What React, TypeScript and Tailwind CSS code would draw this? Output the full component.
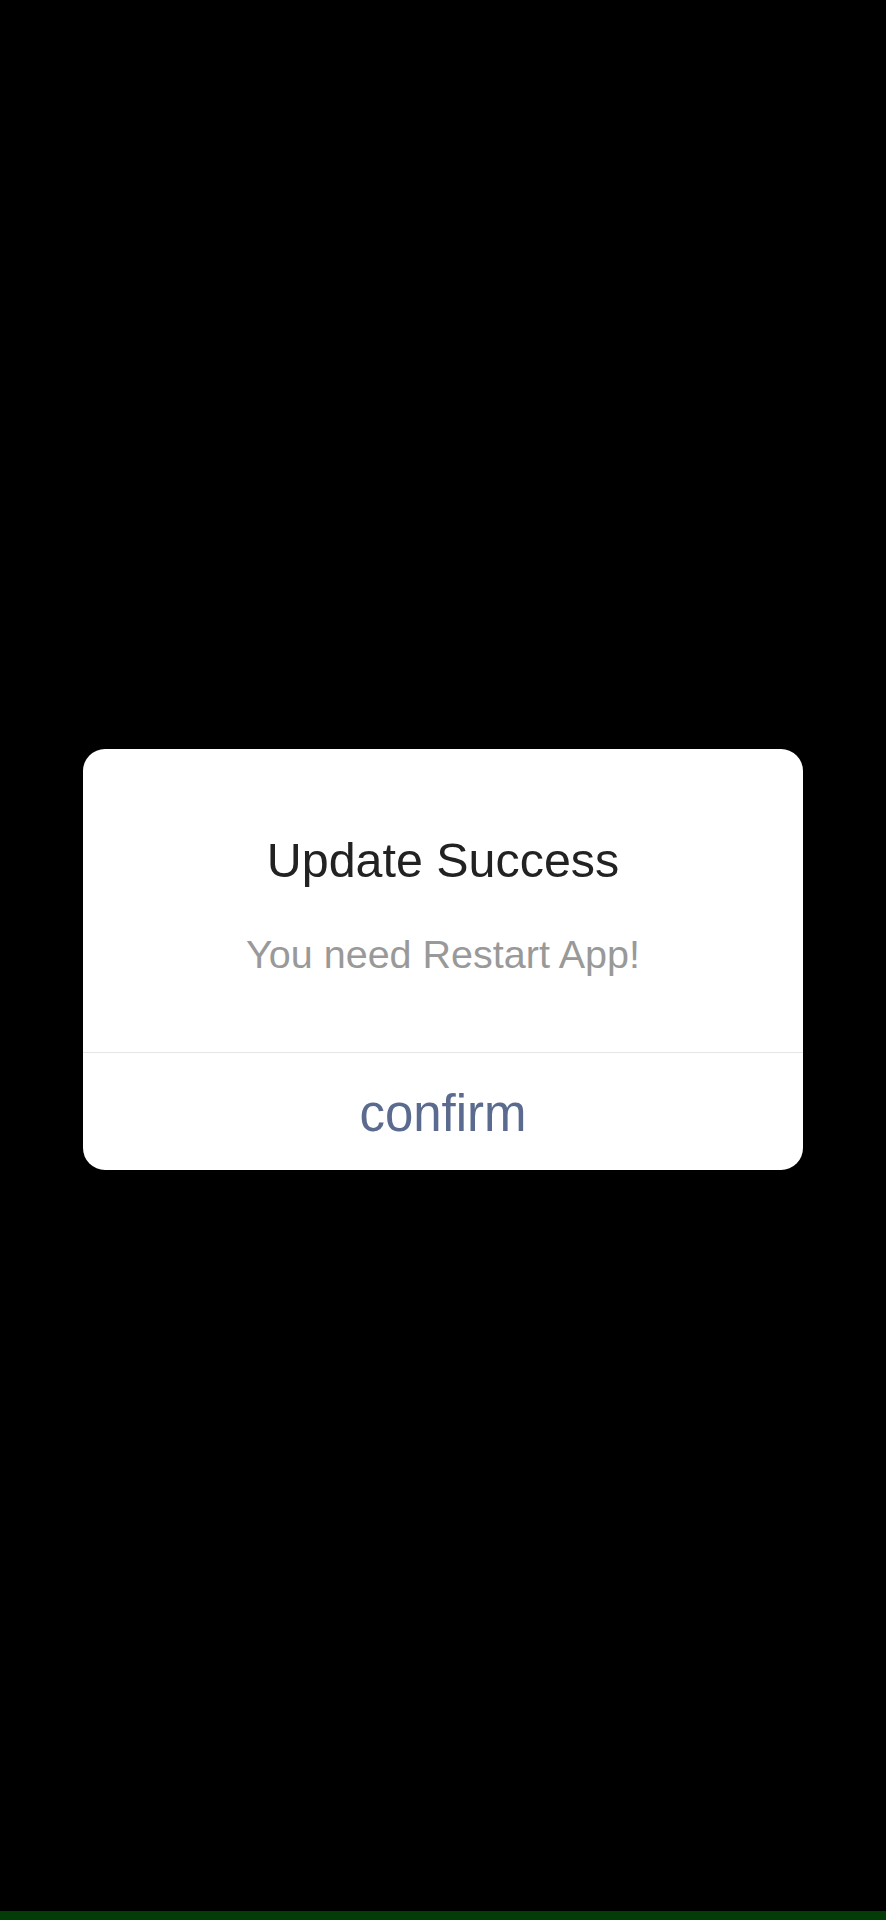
export default function App() {
  return (
    <div className="flex h-[1920px] w-full flex-col bg-black" style={{ fontFamily: '"Liberation Sans", Arial, sans-serif' }}>
      <div className="flex flex-1 items-start justify-center pt-[749px]">
        <div className="flex w-[720px] flex-col overflow-hidden rounded-[22px] bg-white">
          <div className="flex flex-col items-center pt-[87px] pb-[78px]">
            <h2 className="text-[48.4px] leading-[48px] font-normal text-[#222222]">Update Success</h2>
            <p className="mt-[51px] text-[39.5px] leading-[39px] text-[#999999]">You need Restart App!</p>
          </div>
          <div className="h-px bg-[#e6e6e6]" />
          <button className="pt-[36px] pb-[31px] text-[51px] leading-[50px] text-[#5b6a8f]">confirm</button>
        </div>
      </div>
      <div className="h-[9px] bg-[#043c08]" />
    </div>
  );
}
